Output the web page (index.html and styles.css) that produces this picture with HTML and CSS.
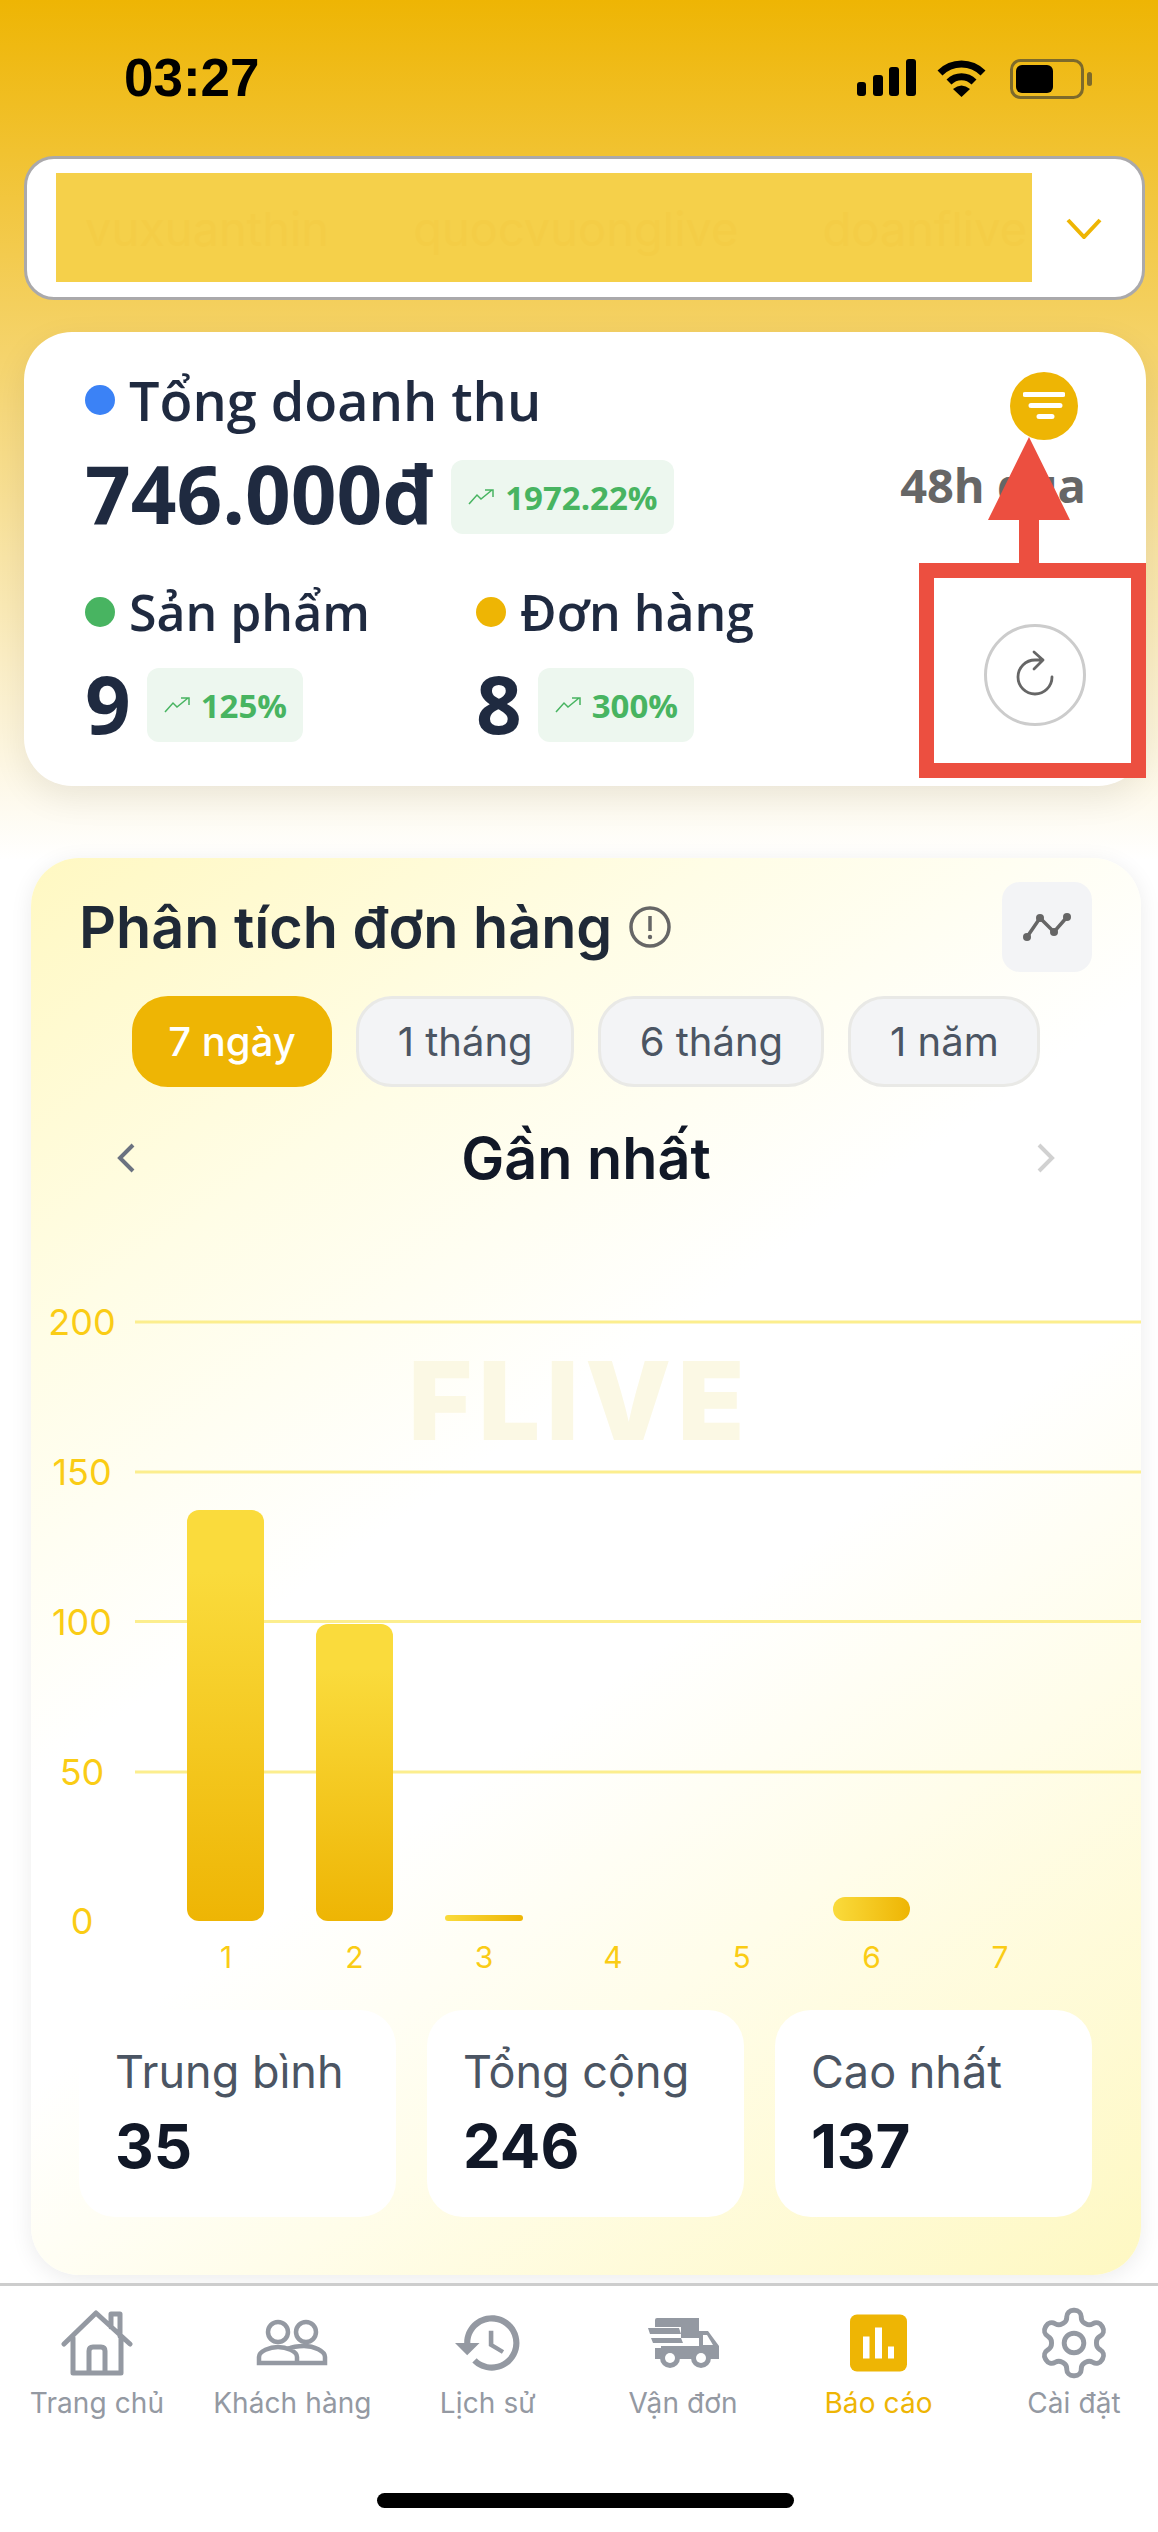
FILE: index.html
```html
<!DOCTYPE html>
<html lang="vi">
<head>
    <meta charset="UTF-8">
    <meta name="viewport" content="width=device-width, initial-scale=1.0">
    <title>Báo cáo</title>
    <link rel="stylesheet" href="styles.css">
</head>
<body>
    <div class="status-bar">
        <span class="time">03:27</span>
        <div class="status-icons">
            <svg width="59" height="37" viewBox="0 0 59 37"><rect x="0" y="23" width="9" height="14" rx="3"/><rect x="16" y="16" width="10" height="21" rx="3"/><rect x="32" y="8" width="10" height="29" rx="3"/><rect x="49" y="0" width="10" height="37" rx="3"/></svg>
            <svg class="wifi" width="51" height="38" viewBox="0 0 51 38"><path d="M4 14C16 2 35 2 47 14M13 23C20 16 31 16 38 23" fill="none" stroke="#000" stroke-width="7"/><path d="M17 30Q25.500 23 34 30L25.500 38Z"/></svg>
            <svg class="battery" width="82" height="40" viewBox="0 0 82 40"><rect x="1.500" y="1.500" width="71" height="37" rx="9" fill="none" stroke="#7d6a2b" stroke-width="3"/><rect x="6" y="6" width="37" height="28" rx="6"/><rect x="77" y="13" width="5" height="14" rx="2.500" fill="#7d6a2b"/></svg>
        </div>
    </div>

    <div class="shop-select">
        <div class="shop-names">
            <span>vuxuanthin</span>
            <span>quocvuonglive</span>
            <span>doanflive</span>
        </div>
        <svg class="shop-chevron" width="36" height="21" viewBox="0 0 36 21"><path d="M2 2L18 19L34 2" fill="none" stroke="#eeb504" stroke-width="4"/></svg>
    </div>

    <div class="summary-card">
        <div class="summary-left">
            <div class="metric-label"><span class="dot dot-blue"></span>Tổng doanh thu</div>
            <div class="metric-row">
                <span class="metric-big">746.000đ</span>
                <span class="badge">
                    <svg width="26" height="16" viewBox="0 0 26 16"><path d="M1 15L9 6L13 10L24 1M17 1H25V8" fill="none" stroke="#48b461" stroke-width="1.500"/></svg>
                    1972.22%
                </span>
            </div>
            <div class="metric-pair">
                <div class="metric-col">
                    <div class="metric-label small"><span class="dot dot-green"></span>Sản phẩm</div>
                    <div class="metric-row">
                        <span class="metric-big">9</span>
                        <span class="badge">
                            <svg width="26" height="16" viewBox="0 0 26 16"><path d="M1 15L9 6L13 10L24 1M17 1H25V8" fill="none" stroke="#48b461" stroke-width="1.500"/></svg>
                            125%
                        </span>
                    </div>
                </div>
                <div class="metric-col">
                    <div class="metric-label small"><span class="dot dot-yellow"></span>Đơn hàng</div>
                    <div class="metric-row">
                        <span class="metric-big">8</span>
                        <span class="badge">
                            <svg width="26" height="16" viewBox="0 0 26 16"><path d="M1 15L9 6L13 10L24 1M17 1H25V8" fill="none" stroke="#48b461" stroke-width="1.500"/></svg>
                            300%
                        </span>
                    </div>
                </div>
            </div>
        </div>
        <div class="summary-right">
            <div class="filter-btn">
                <svg width="42" height="28" viewBox="0 0 42 28"><path d="M2 2.500H40M8 13.500H37M16 24.500H29" fill="none" stroke="#fff" stroke-width="5" stroke-linecap="round"/></svg>
            </div>
            <div class="time-range">48h qua</div>
            <div class="refresh-btn">
                <svg width="60" height="60" viewBox="0 0 60 60"><path d="M47 32A17 17 0 1 1 30 15H38M29 7L38 15L29 24" fill="none" stroke="#666" stroke-width="2.800" stroke-linecap="round" stroke-linejoin="round"/></svg>
            </div>
        </div>
        <!-- annotation over the card -->
        <svg class="annotation" width="227" height="341" viewBox="0 0 227 341">
            <path d="M110 0L151 83H120V130H100V83H69Z" fill="#ec4f40"/>
            <rect x="7.500" y="133.500" width="212" height="200" fill="none" stroke="#ec4f40" stroke-width="15"/>
        </svg>
    </div>

    <div class="chart-card">
        <div class="chart-head">
            <div class="chart-title">
                Phân tích đơn hàng
                <svg width="42" height="42" viewBox="0 0 42 42"><circle cx="21" cy="21" r="19" fill="none" stroke="#666" stroke-width="3.500"/><path d="M21 10V25" stroke="#666" stroke-width="3.500"/><circle cx="21" cy="31" r="2.200" fill="#666"/></svg>
            </div>
            <div class="chart-toggle">
                <svg width="50" height="30" viewBox="0 0 50 30"><path d="M5 25L18 6L32 20L45 5" fill="none" stroke="#666" stroke-width="3.500"/><circle cx="5" cy="25" r="4" fill="#666"/><circle cx="18" cy="6" r="4" fill="#666"/><circle cx="32" cy="20" r="4" fill="#666"/><circle cx="45" cy="5" r="4" fill="#666"/></svg>
            </div>
        </div>
        <div class="tabs">
            <div class="tab active">7 ngày</div>
            <div class="tab">1 tháng</div>
            <div class="tab">6 tháng</div>
            <div class="tab">1 năm</div>
        </div>
        <div class="period">
            <svg width="20" height="30" viewBox="0 0 20 30"><path d="M17 2L4 15L17 28" fill="none" stroke="#6b7280" stroke-width="4"/></svg>
            <span class="period-name">Gần nhất</span>
            <svg width="20" height="30" viewBox="0 0 20 30"><path d="M3 2L16 15L3 28" fill="none" stroke="#d1d1d1" stroke-width="4"/></svg>
        </div>
        <svg class="chart" width="1110" height="700" viewBox="31 1290 1110 700">
            <defs>
                <linearGradient id="barFill" x1="0" y1="0" x2="0" y2="1"><stop offset="0.150" stop-color="#fadb3c"/><stop offset="1" stop-color="#eeb504"/></linearGradient>
                <linearGradient id="barFlat" x1="0" y1="0" x2="1" y2="0"><stop offset="0" stop-color="#fadb3c"/><stop offset="1" stop-color="#eeb504"/></linearGradient>
            </defs>
            <text class="watermark" x="580" y="1440" text-anchor="middle">FLIVE</text>
            <g class="grid">
                <path d="M135 1322H1141M135 1472H1141M135 1621.500H1141M135 1772H1141"/>
            </g>
            <g class="y-labels">
                <text x="82" y="1335">200</text>
                <text x="82" y="1485">150</text>
                <text x="82" y="1635">100</text>
                <text x="82" y="1785">50</text>
                <text x="82" y="1934">0</text>
            </g>
            <rect x="187" y="1510" width="77" height="411" rx="12" fill="url(#barFill)"/>
            <rect x="316" y="1624" width="77" height="297" rx="12" fill="url(#barFill)"/>
            <rect x="445" y="1915" width="78" height="6" rx="3" fill="url(#barFlat)"/>
            <rect x="833" y="1897" width="77" height="24" rx="12" fill="url(#barFlat)"/>
            <g class="x-labels">
                <text x="226" y="1968">1</text>
                <text x="354.500" y="1968">2</text>
                <text x="484" y="1968">3</text>
                <text x="613" y="1968">4</text>
                <text x="741.500" y="1968">5</text>
                <text x="871.500" y="1968">6</text>
                <text x="1000" y="1968">7</text>
            </g>
        </svg>
        <div class="stats">
            <div class="stat"><div class="stat-label">Trung bình</div><div class="stat-value">35</div></div>
            <div class="stat"><div class="stat-label">Tổng cộng</div><div class="stat-value">246</div></div>
            <div class="stat"><div class="stat-label">Cao nhất</div><div class="stat-value">137</div></div>
        </div>
    </div>

    <div class="bottom-nav">
        <div class="nav-item">
            <svg width="72" height="68" viewBox="0 0 72 68"><path d="M3 35L35 4L69 35M50 18V5H59V27M12 29V64H60V29M28 64V42Q28 38 32 38H40Q44 38 44 42V64" fill="none" stroke="#9499a2" stroke-width="5" stroke-linejoin="round" stroke-linecap="round"/></svg>
            <span>Trang chủ</span>
        </div>
        <div class="nav-item">
            <svg width="72" height="46" viewBox="0 0 72 46"><circle cx="22" cy="12" r="10" fill="none" stroke="#9499a2" stroke-width="4.500"/><circle cx="50" cy="12" r="10" fill="none" stroke="#9499a2" stroke-width="4.500"/><path d="M3 43V37C3 31 14 27 22 27C30 27 41 31 41 37V43ZM32 29C36 27 42 26 48 26C58 26 69 31 69 37V43H41" fill="none" stroke="#9499a2" stroke-width="4.500"/></svg>
            <span>Khách hàng</span>
        </div>
        <div class="nav-item">
            <svg width="66" height="57" viewBox="1 3 21.500 18"><path fill="#9499a2" d="M13 3c-4.970 0-9 4.030-9 9H1l3.890 3.890.07.140L9 12H6c0-3.870 3.130-7 7-7s7 3.130 7 7-3.130 7-7 7c-1.930 0-3.680-.790-4.940-2.060l-1.420 1.420C8.270 19.990 10.510 21 13 21c4.970 0 9-4.030 9-9s-4.030-9-9-9zm-1 5v5l4.280 2.540.720-1.210-3.500-2.080V8H12z"/></svg>
            <span>Lịch sử</span>
        </div>
        <div class="nav-item">
            <svg width="71" height="50" viewBox="0 0 71 50" fill="#9499a2"><path d="M7 2Q7 0 9 0H51V13H60L71 28V41H7V30H13V28H51V20H33V9H7Z"/><path d="M0 10H31L33 16H2ZM3 20H33L35 25H5Z"/><path d="M55 17H59L65 27H55Z" fill="#fff"/><circle cx="22" cy="40" r="10"/><circle cx="53" cy="40" r="10"/><circle cx="22" cy="40" r="5" fill="#fff"/><circle cx="53" cy="40" r="5" fill="#fff"/></svg>
            <span>Vận đơn</span>
        </div>
        <div class="nav-item on">
            <svg width="57" height="57" viewBox="0 0 57 57"><rect width="57" height="57" rx="7" fill="#eeb504"/><path d="M13 22H19.500V44H13ZM25 13H32V44H25ZM38 32H44V44H38Z" fill="#fff"/></svg>
            <span>Báo cáo</span>
        </div>
        <div class="nav-item">
            <svg width="72" height="72" viewBox="1 1 22 22"><path fill="none" stroke="#9499a2" stroke-width="1.500" stroke-linejoin="round" d="M12.220 2h-.440a2 2 0 0 0-2 2v.180a2 2 0 0 1-1 1.730l-.430.250a2 2 0 0 1-2 0l-.150-.080a2 2 0 0 0-2.730.730l-.220.380a2 2 0 0 0 .730 2.730l.150.100a2 2 0 0 1 1 1.720v.510a2 2 0 0 1-1 1.740l-.150.090a2 2 0 0 0-.730 2.730l.220.380a2 2 0 0 0 2.730.730l.150-.080a2 2 0 0 1 2 0l.430.250a2 2 0 0 1 1 1.730V20a2 2 0 0 0 2 2h.440a2 2 0 0 0 2-2v-.180a2 2 0 0 1 1-1.730l.430-.250a2 2 0 0 1 2 0l.150.080a2 2 0 0 0 2.730-.730l.220-.390a2 2 0 0 0-.730-2.730l-.150-.080a2 2 0 0 1-1-1.740v-.500a2 2 0 0 1 1-1.740l.150-.090a2 2 0 0 0 .730-2.730l-.220-.380a2 2 0 0 0-2.730-.730l-.150.080a2 2 0 0 1-2 0l-.430-.250a2 2 0 0 1-1-1.730V4a2 2 0 0 0-2-2z"/><circle cx="12" cy="12" r="3" fill="none" stroke="#9499a2" stroke-width="1.500"/></svg>
            <span>Cài đặt</span>
        </div>
    </div>
    <div class="home-area"><div class="home-bar"></div></div>
</body>
</html>
```

FILE: styles.css
```css
* {
    box-sizing: border-box;
}
body {
    margin: 0;
    width: 1158px;
    height: 2532px;
    overflow: hidden;
    font-family: Inter, "Noto Sans", sans-serif;
    background: linear-gradient(to bottom, #eeb504 0, #ffffff 860px);
    background-color: #fff;
}

/* status bar */
.status-bar {
    height: 156px;
    padding: 48px 66px 0 124px;
    display: flex;
    justify-content: space-between;
    align-items: flex-start;
}
.time {
    font-family: "Liberation Sans", sans-serif;
    font-weight: 700;
    font-size: 53px;
    line-height: 60px;
    color: #000;
}
.status-icons {
    display: flex;
    align-items: flex-start;
    gap: 20px;
    padding-top: 11px;
}
.wifi {
    margin-right: 3px;
}

/* shop select */
.shop-select {
    height: 144px;
    margin: 0 13px 0 24px;
    padding: 14px 40px 15px 29px;
    background: #fff;
    border: 3px solid #aaa9ab;
    border-radius: 30px;
    display: flex;
    align-items: center;
    justify-content: space-between;
}
.shop-names {
    width: 976px;
    height: 109px;
    padding: 26px 0 0 29px;
    background: #f5d04a;
    overflow: hidden;
    display: flex;
    gap: 84px;
    white-space: nowrap;
    font-size: 47px;
    line-height: 60px;
    color: #f4cd46;
}
.shop-chevron {
    margin-top: 2px;
}

/* summary card */
.summary-card {
    position: relative;
    height: 454px;
    margin: 32px 12px 0 24px;
    padding: 0 60px 0 61px;
    background: #fff;
    border-radius: 48px;
    box-shadow: 0 12px 34px rgba(0, 0, 0, 0.08);
    display: flex;
    justify-content: space-between;
    font-family: "Open Sans", sans-serif;
}
.summary-left {
    padding-top: 38px;
}
.metric-label {
    display: flex;
    align-items: center;
    height: 60px;
    font-size: 54px;
    font-weight: 600;
    line-height: 60px;
    color: #1f2a40;
    white-space: nowrap;
}
.metric-label.small {
    font-size: 50px;
}
.dot {
    width: 30px;
    height: 30px;
    margin-right: 14px;
    border-radius: 50%;
}
.dot-blue {
    background: #3b82f6;
}
.dot-green {
    background: #48b461;
}
.dot-yellow {
    background: #eeb504;
}
.metric-row {
    display: flex;
    align-items: center;
    gap: 17px;
    margin-top: 21px;
}
.metric-big {
    font-size: 80px;
    font-weight: 700;
    line-height: 84px;
    color: #1f2a40;
}
.badge {
    height: 74px;
    margin-top: 8px;
    padding: 0 16px 0 17px;
    display: flex;
    align-items: center;
    gap: 11px;
    background: #edf7ef;
    border-radius: 12px;
    font-size: 33px;
    font-weight: 700;
    color: #48b461;
}
.metric-pair {
    display: flex;
    gap: 0;
    margin-top: 47px;
}
.metric-col {
    width: 391px;
}
.metric-col .metric-row {
    gap: 16px;
    margin-top: 19px;
}
.metric-col .badge {
    margin-top: 4px;
}
.summary-right {
    display: flex;
    flex-direction: column;
    align-items: flex-end;
    padding-top: 40px;
}
.filter-btn {
    width: 68px;
    height: 68px;
    margin-right: 8px;
    background: #eeb504;
    border-radius: 50%;
    display: flex;
    align-items: center;
    justify-content: center;
}
.time-range {
    margin-top: 15px;
    font-size: 47px;
    font-weight: 700;
    line-height: 60px;
    color: #666;
    white-space: nowrap;
}
.refresh-btn {
    width: 102px;
    height: 102px;
    margin: 109px 0 0 0;
    border: 3px solid #ccc;
    border-radius: 50%;
    display: flex;
    align-items: center;
    justify-content: center;
}
.annotation {
    position: absolute;
    left: 895px;
    top: 105px;
}

/* chart card */
.chart-card {
    height: 1417px;
    margin: 72px 17px 0 31px;
    padding-top: 24px;
    border-radius: 48px;
    background: linear-gradient(145deg, #fff8c2 0%, #fffde6 22%, #ffffff 42%, #ffffff 56%, #fffdea 72%, #fef8c2 100%);
    box-shadow: 0 4px 22px rgba(0, 0, 0, 0.08);
}
.chart-head {
    display: flex;
    justify-content: space-between;
    align-items: center;
    padding: 0 49px 0 48px;
}
.chart-title {
    display: flex;
    align-items: center;
    gap: 17px;
    font-size: 57.500px;
    font-weight: 600;
    line-height: 70px;
    color: #1f2937;
    white-space: nowrap;
}
.chart-toggle {
    width: 90px;
    height: 90px;
    background: #f3f4f6;
    border-radius: 18px;
    display: flex;
    align-items: center;
    justify-content: center;
}
.tabs {
    display: flex;
    justify-content: center;
    gap: 24px;
    margin-top: 24px;
}
.tab {
    height: 91px;
    padding: 0 38px 0 39px;
    background: #f3f4f6;
    border: 3px solid #e9e9e6;
    border-radius: 36px;
    font-size: 40px;
    font-weight: 400;
    line-height: 85px;
    color: #4b5563;
    white-space: nowrap;
}
.tab.active {
    padding: 0 33px;
    background: #eeb504;
    border-color: #eeb504;
    color: #fff;
    font-weight: 500;
}
.period {
    display: flex;
    justify-content: space-between;
    align-items: center;
    height: 70px;
    margin-top: 36px;
    padding: 0 85px;
}
.period-name {
    font-size: 57.500px;
    font-weight: 600;
    line-height: 70px;
    color: #111827;
}
.chart {
    display: block;
    margin-top: 97px;
    overflow: hidden;
}
.grid path {
    fill: none;
    stroke: #fcee8e;
    stroke-width: 3;
}
.y-labels text {
    font-size: 36px;
    fill: #facc15;
    text-anchor: middle;
}
.x-labels text {
    font-size: 30px;
    fill: #facc15;
    text-anchor: middle;
}
.watermark {
    font-family: Inter, sans-serif;
    font-size: 108px;
    font-weight: 900;
    letter-spacing: 7px;
    fill: #fbf8e4;
}
.stats {
    display: grid;
    grid-template-columns: repeat(3, 1fr);
    gap: 31px;
    margin-top: 20px;
    padding: 0 49px 0 48px;
}
.stat {
    height: 207px;
    padding: 34px 36px;
    background: #fff;
    border-radius: 36px;
}
.stat-label {
    font-size: 45px;
    line-height: 56px;
    color: #4b5563;
    white-space: nowrap;
}
.stat-value {
    margin-top: 12px;
    font-size: 60px;
    font-weight: 700;
    line-height: 68px;
    color: #111827;
}

/* bottom navigation */
.bottom-nav {
    height: 190px;
    margin-top: 8px;
    padding: 21px 4px 0 17px;
    background: #fff;
    border-top: 3px solid #cdcdcd;
    display: grid;
    grid-template-columns: repeat(6, 160px);
    justify-content: space-between;
}
.nav-item {
    display: flex;
    flex-direction: column;
    align-items: center;
    font-size: 28px;
    color: #9499a2;
    white-space: nowrap;
}
.nav-item svg {
    height: 72px;
}
.nav-item span {
    margin-top: 6px;
    line-height: 36px;
    letter-spacing: 0.1px;
}
.nav-item.on span {
    color: #eeb504;
}
.home-area {
    background: #fff;
    height: 59px;
    padding-top: 20px;
}
.home-bar {
    width: 417px;
    height: 15px;
    margin-left: 377px;
    background: #000;
    border-radius: 8px;
}
```
